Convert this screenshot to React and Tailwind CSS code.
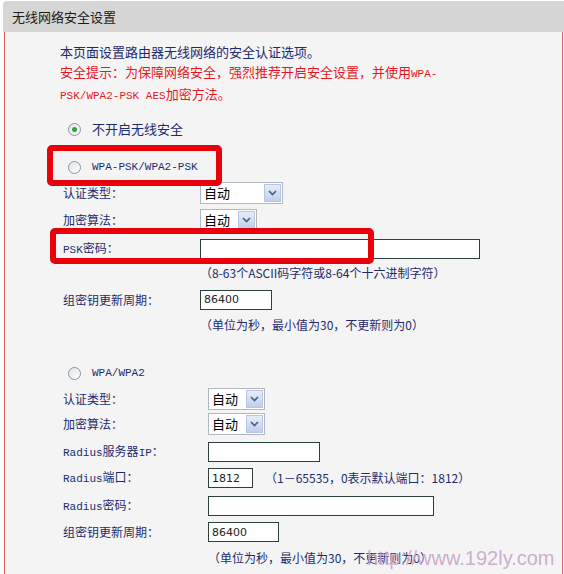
import React from "react";

const CJK = { fontFamily: '"Noto Sans CJK SC", "DejaVu Sans", sans-serif' };
const MONO = { fontFamily: '"Liberation Mono", "DejaVu Sans Mono", monospace' };

function M({ children }) {
  return (
    <span className="text-[11px]" style={MONO}>
      {children}
    </span>
  );
}

function Radio({ checked }) {
  return (
    <span className="w-[13px] h-[13px] rounded-full border border-[#8595a6] bg-gradient-to-br from-[#dfe3e8] to-[#ffffff] flex items-center justify-center shrink-0">
      {checked && <span className="w-[5px] h-[5px] rounded-full bg-[#2ea53a]" />}
    </span>
  );
}

function Select({ w }) {
  return (
    <div className={`flex h-[22px] ${w} border border-[#b2b8c0] bg-white`}>
      <span className="flex-1 pl-[3px] leading-[20px] text-[13px] text-black">自动</span>
      <span className="w-[17px] my-[1px] mr-[1px] border border-[#b5c5e2] bg-gradient-to-b from-[#e6edf8] to-[#bfcfea] flex items-center justify-center">
        <svg width="9" height="6" viewBox="0 0 9 6">
          <path d="M1 1 L4.5 4.5 L8 1" fill="none" stroke="#4b5e84" strokeWidth="1.7" />
        </svg>
      </span>
    </div>
  );
}

function Input({ w, value = "" }) {
  return (
    <input
      readOnly
      value={value}
      className={`h-[20px] ${w} border border-[#2c3f3f] bg-white pl-[3px] text-[12px] text-[#222] outline-none`}
      style={{ fontFamily: '"DejaVu Sans", sans-serif', fontSize: "11px" }}
    />
  );
}

function Row({ label, col, mt, h = "h-[22px]", children }) {
  return (
    <div className={`flex items-center ${h} ${mt}`}>
      <div className={`${col} shrink-0 text-[12px] text-[#1d2b6e]`}>{label}</div>
      {children}
    </div>
  );
}

export default function App() {
  return (
    <div className="relative w-[564px] h-[574px] bg-white overflow-hidden" style={CJK}>
      <div className="ml-[3px] mt-[1px] h-[31px] bg-[#d6d6d6] rounded-tl-[4px] flex items-center pl-[9px] text-[13px] text-[#1a1a1a]">
        无线网络安全设置
      </div>
      <div className="ml-[4px] w-[559px] h-[542px] border-l border-r border-[#e06464] bg-[#f4f4f4]">
        <div className="pl-[55px] pt-[10px] text-[13px] leading-[20px]">
          <div className="text-[#1d2b6e]">本页面设置路由器无线网络的安全认证选项。</div>
          <div className="text-[#e8171f]">
            安全提示：为保障网络安全，强烈推荐开启安全设置，并使用<M>WPA-</M>
          </div>
          <div className="text-[#e8171f]">
            <M>PSK/WPA2-PSK AES</M>加密方法。
          </div>
        </div>

        <div className="pl-[58px]">
          <div className="flex items-center h-[20px] mt-[13px] pl-[5px] gap-[11px] text-[13px] text-[#1d2b6e]">
            <Radio checked />
            <span>不开启无线安全</span>
          </div>

          <div className="flex items-center h-[20px] mt-[18px] pl-[5px] gap-[11px] text-[#1d2b6e]">
            <Radio />
            <M>WPA-PSK/WPA2-PSK</M>
          </div>

          <Row label="认证类型：" col="w-[137px]" mt="mt-[5px]">
            <Select w="w-[83px]" />
          </Row>
          <Row label="加密算法：" col="w-[137px]" mt="mt-[5px]">
            <Select w="w-[57px]" />
          </Row>
          <Row label={<><M>PSK</M>密码：</>} col="w-[137px]" mt="mt-[7px]">
            <Input w="w-[280px]" />
          </Row>
          <Row label="" col="w-[137px]" mt="mt-[3px]" h="h-[20px]">
            <span className="text-[12px] text-[#1d2b6e]">（8-63个ASCII码字符或8-64个十六进制字符）</span>
          </Row>
          <Row label="组密钥更新周期：" col="w-[137px]" mt="mt-[6px]" h="h-[21px]">
            <Input w="w-[72px]" value="86400" />
          </Row>
          <Row label="" col="w-[137px]" mt="mt-[5px]" h="h-[20px]">
            <span className="text-[12px] text-[#1d2b6e]">（单位为秒，最小值为30，不更新则为0）</span>
          </Row>

          <div className="flex items-center h-[20px] mt-[28px] pl-[5px] gap-[11px] text-[#1d2b6e]">
            <Radio />
            <M>WPA/WPA2</M>
          </div>

          <Row label="认证类型：" col="w-[145px]" mt="mt-[5px]">
            <Select w="w-[57px]" />
          </Row>
          <Row label="加密算法：" col="w-[145px]" mt="mt-[3px]">
            <Select w="w-[57px]" />
          </Row>
          <Row label={<><M>Radius</M>服务器<M>IP</M>：</>} col="w-[145px]" mt="mt-[6px]">
            <Input w="w-[112px]" />
          </Row>
          <Row label={<><M>Radius</M>端口：</>} col="w-[145px]" mt="mt-[4px]">
            <Input w="w-[45px]" value="1812" />
            <span className="ml-[12px] text-[12px] text-[#1d2b6e]">（1－65535，0表示默认端口：1812）</span>
          </Row>
          <Row label={<><M>Radius</M>密码：</>} col="w-[145px]" mt="mt-[6px]">
            <Input w="w-[226px]" />
          </Row>
          <Row label="组密钥更新周期：" col="w-[145px]" mt="mt-[4px]">
            <Input w="w-[71px]" value="86400" />
          </Row>
          <Row label="" col="w-[145px]" mt="mt-[5px]" h="h-[20px]">
            <span className="text-[12px] text-[#1d2b6e]">（单位为秒，最小值为30，不更新则为0）</span>
          </Row>
        </div>
      </div>

      {/* annotation boxes */}
      <div className="absolute left-[47px] top-[145px] w-[175px] h-[41px] border-[6px] border-[#e8000b] rounded-[5px]" />
      <div className="absolute left-[50px] top-[228px] w-[324px] h-[36px] border-[6px] border-[#e8000b] rounded-[5px]" />

      {/* watermark */}
      <div
        className="absolute left-[367px] top-[545px] text-[20px] leading-[26px] text-[#c9a3cc]/90"
        style={{ fontFamily: '"Liberation Sans", Arial, sans-serif' }}
      >
        http://www.192ly.com
      </div>
    </div>
  );
}
